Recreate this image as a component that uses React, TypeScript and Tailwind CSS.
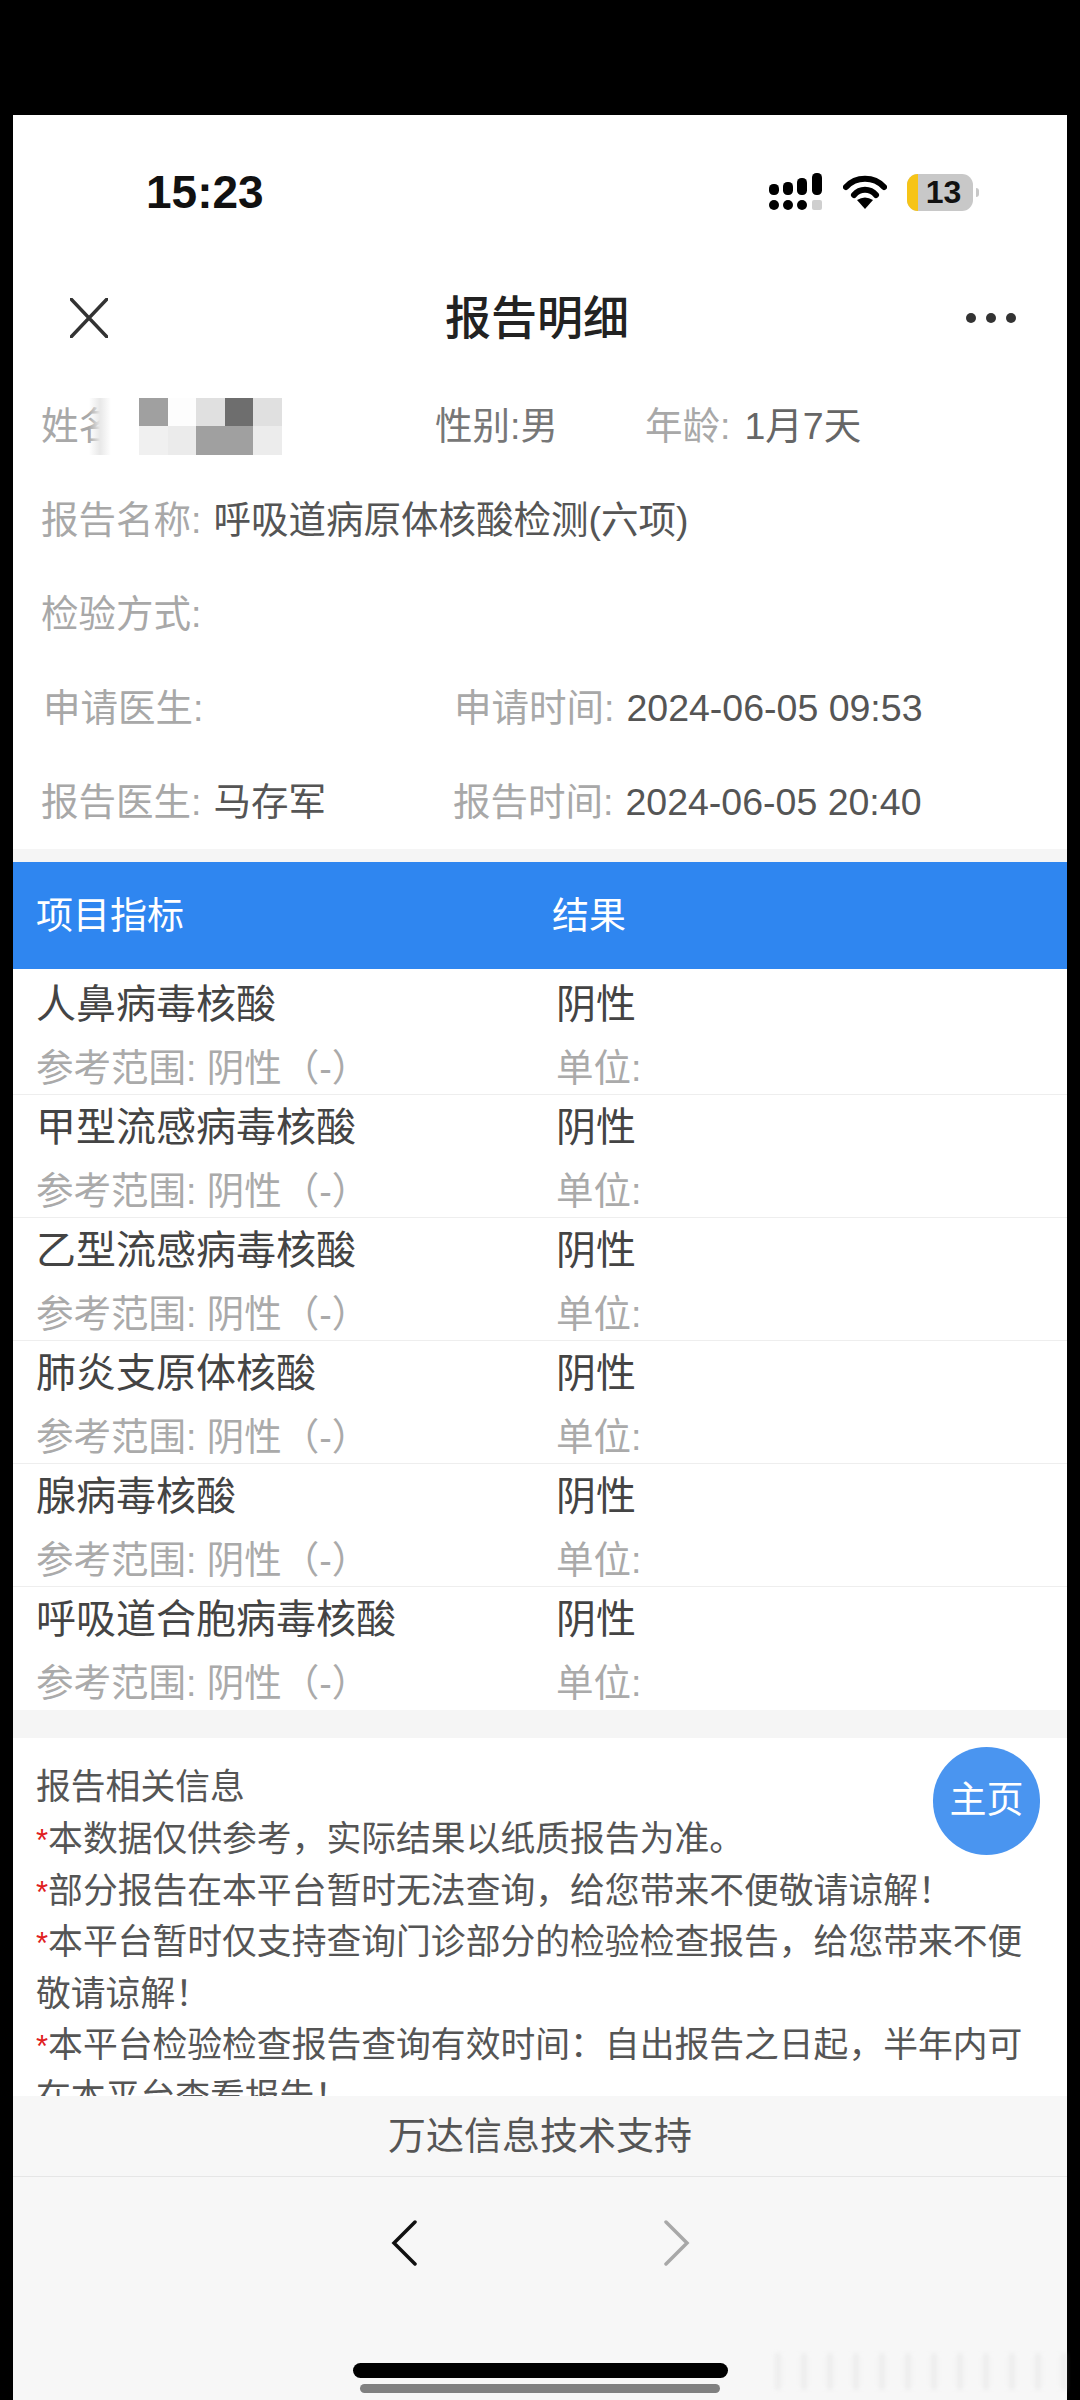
const fontStack = "font-['Liberation_Sans','Noto_Sans_CJK_SC',sans-serif]";

const tests = ["人鼻病毒核酸", "甲型流感病毒核酸", "乙型流感病毒核酸", "肺炎支原体核酸", "腺病毒核酸", "呼吸道合胞病毒核酸"];

const mosaic = [
  "bg-[#a0a0a0]", "bg-[#fdfdfd]", "bg-[#e0e0e0]", "bg-[#6e6e6e]", "bg-[#e0e0e0]",
  "bg-[#f0f0f0]", "bg-[#ebebeb]", "bg-[#a0a0a0]", "bg-[#a0a0a0]", "bg-[#ececec]",
];

const notes = [
  "本数据仅供参考，实际结果以纸质报告为准。",
  "部分报告在本平台暂时无法查询，给您带来不便敬请谅解！",
  "本平台暂时仅支持查询门诊部分的检验检查报告，给您带来不便敬请谅解！",
  "本平台检验检查报告查询有效时间：自出报告之日起，半年内可在本平台查看报告！",
];

const StatusBar = () => (
  <div className="h-[154px] flex items-center justify-between pl-[133px] pr-[88px]">
    <span className="text-[46px] font-bold text-[#111]">15:23</span>
    <div className="flex items-center">
      <svg width="54" height="38" viewBox="0 0 54 38">
        <rect x="0" y="11" width="10" height="11" rx="4.5" fill="#000" />
        <rect x="14" y="9" width="10" height="13" rx="4.5" fill="#000" />
        <rect x="28" y="5" width="10" height="17" rx="4.5" fill="#000" />
        <rect x="43" y="0" width="10" height="22" rx="4.5" fill="#000" />
        <circle cx="5" cy="32" r="5" fill="#000" />
        <circle cx="19" cy="32" r="5" fill="#000" />
        <circle cx="33" cy="32" r="5" fill="#000" />
        <rect x="43" y="27" width="10" height="10" rx="2" fill="#cfcfcf" />
      </svg>
      <svg className="ml-[20px]" width="44" height="34" viewBox="0 0 44 34">
        <path d="M3 12 C13 1 31 1 41 12" fill="none" stroke="#000" strokeWidth="6" strokeLinecap="round" />
        <path d="M11 20 C17 13 27 13 33 20" fill="none" stroke="#000" strokeWidth="6" strokeLinecap="round" />
        <path d="M14 25 Q22 20 30 25 L22 34 Z" fill="#000" />
      </svg>
      <div className="ml-[20px] relative w-[66px] h-[37px] rounded-[11px] bg-[#c8c8c8] overflow-hidden flex items-center justify-center">
        <div className="absolute left-0 top-0 bottom-0 w-[11px] bg-[#f6c417]" />
        <span className="text-[32px] font-bold text-[#111] pl-[7px]">13</span>
      </div>
      <div className="ml-[3px] w-[3px] h-[9px] rounded-r-full bg-[#c8c8c8]" />
    </div>
  </div>
);

const NavBar = () => (
  <div className="h-[98px] flex items-center justify-between pl-[57px] pr-[51px]">
    <svg width="38" height="40" viewBox="0 0 38 40">
      <path d="M1 1 L37 39 M37 1 L1 39" stroke="#333" strokeWidth="3.5" strokeLinecap="round" fill="none" />
    </svg>
    <span className="text-[46px] font-medium text-[#222]">报告明细</span>
    <div className="flex gap-[10px]">
      <div className="w-[10px] h-[10px] rounded-full bg-[#333]" />
      <div className="w-[10px] h-[10px] rounded-full bg-[#333]" />
      <div className="w-[10px] h-[10px] rounded-full bg-[#333]" />
    </div>
  </div>
);

const PatientInfo = () => (
  <div className="pt-[12px] text-[37.5px] text-[#a8a8a8]">
    <div className="h-[94px] flex items-center">
      <div className="relative w-[422px] pl-[28px] flex items-center">
        <span className="w-[98px] overflow-hidden whitespace-nowrap">姓名</span>
        <div className="absolute left-[76px] top-0 w-[22px] h-[57px] bg-gradient-to-r from-transparent via-[#e8e8e8] to-white" />
        <div className="grid grid-cols-5 w-[143px] h-[57px]">
          {mosaic.map((c, i) => (
            <div key={i} className={c} />
          ))}
        </div>
      </div>
      <span className="w-[210px] text-[#777]">性别:男</span>
      <span>年龄:</span>
      <span className="ml-[14px] text-[#666]">1月7天</span>
    </div>
    <div className="h-[94px] flex items-center pl-[28px]">
      报告名称:<span className="ml-[12px] text-[#555]">呼吸道病原体核酸检测(六项)</span>
    </div>
    <div className="h-[94px] flex items-center pl-[28px]">检验方式:</div>
    <div className="h-[94px] flex items-center pl-[30px]">
      <span className="w-[411px]">申请医生:</span>
      申请时间:<span className="ml-[12px] text-[#555]">2024-06-05 09:53</span>
    </div>
    <div className="h-[94px] flex items-center pl-[28px]">
      <span className="w-[412px]">
        报告医生:<span className="ml-[12px] text-[#555]">马存军</span>
      </span>
      报告时间:<span className="ml-[12px] text-[#555]">2024-06-05 20:40</span>
    </div>
  </div>
);

const ResultTable = () => (
  <div>
    <div className="h-[107px] bg-[#2f86f0] flex items-center pl-[23px] pt-[2px] text-[37px] text-white">
      <span className="w-[516px]">项目指标</span>
      <span>结果</span>
    </div>
    <div className="pt-[3px]">
      {tests.map((name, key) => (
        <div key={key} className="h-[123px] border-b border-[#eeeeee] last:border-b-0 pl-[23px]">
          <div className="h-[63px] flex items-center text-[40px] text-[#444]">
            <span className="w-[520px]">{name}</span>
            <span>阴性</span>
          </div>
          <div className="h-[59px] pt-[7px] flex items-center text-[37.5px] text-[#aaaaaa]">
            <span className="w-[520px]">参考范围: 阴性（-）</span>
            <span>单位:</span>
          </div>
        </div>
      ))}
    </div>
  </div>
);

const Notes = () => (
  <div className="relative h-[358px] overflow-hidden pt-[26px] pl-[23px] pr-[27px] text-[34.8px] leading-[51.5px] text-[#555]">
    <div className="h-[49px] leading-[46px]">报告相关信息</div>
    {notes.map((text, key) => (
      <div key={key}>
        <span className="text-[31px] leading-none text-[#e02020]">*</span>
        {text}
      </div>
    ))}
    <div className="absolute left-[920px] top-[9px] w-[107px] h-[108px] rounded-full bg-[#4a95f0] flex items-center justify-center text-[37px] text-white">
      主页
    </div>
  </div>
);

const Footer = () => (
  <div className="relative h-[304px] bg-[#f7f7f7]">
    <div className="h-[81px] border-b border-[#e6e6e6] flex items-center justify-center text-[38px] text-[#555]">
      万达信息技术支持
    </div>
    <div className="h-[132px] flex items-center justify-center gap-[247px]">
      <svg width="26" height="46" viewBox="0 0 26 46">
        <path d="M24 2 L3 23 L24 44" stroke="#111" strokeWidth="3.5" fill="none" strokeLinecap="round" />
      </svg>
      <svg width="26" height="46" viewBox="0 0 26 46">
        <path d="M2 2 L23 23 L2 44" stroke="#a8a8a8" strokeWidth="3.5" fill="none" strokeLinecap="round" />
      </svg>
    </div>
    <div className="mt-[54px] flex flex-col items-center">
      <div className="w-[375px] h-[15px] rounded-full bg-black" />
      <div className="mt-[6px] w-[360px] h-[9px] rounded-full bg-[#808080]" />
    </div>
    <div className="absolute left-[762px] top-[257px] right-0 h-[37px] opacity-20 blur-[2px] bg-[repeating-linear-gradient(90deg,#c8c8c8_0px,#c8c8c8_6px,#f7f7f7_6px,#f7f7f7_26px)]" />
  </div>
);

export default function App() {
  return (
    <div className={`w-[1080px] h-[2400px] bg-black pt-[115px] px-[13px] overflow-hidden ${fontStack}`}>
      <div className="h-[2285px] bg-white flex flex-col">
        <StatusBar />
        <NavBar />
        <PatientInfo />
        <div className="h-[13px] bg-[#f5f5f5]" />
        <ResultTable />
        <div className="h-[28px] bg-[#f5f5f5]" />
        <Notes />
        <Footer />
      </div>
    </div>
  );
}
